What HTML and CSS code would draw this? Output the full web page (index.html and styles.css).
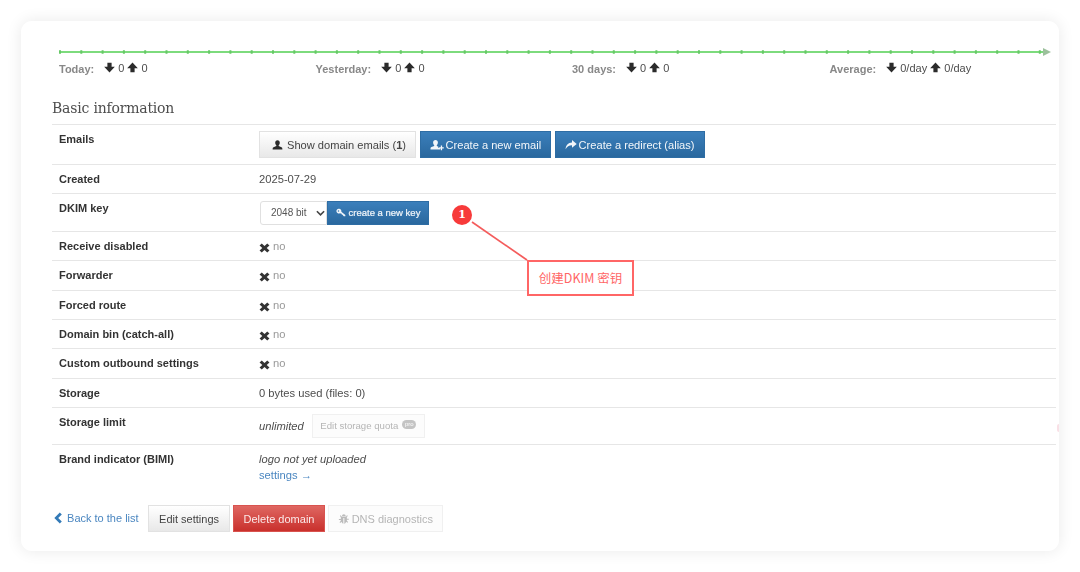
FILE: index.html
```html
<!DOCTYPE html>
<html lang="en">
<head>
<meta charset="utf-8">
<title>Domain</title>
<link rel="stylesheet" href="styles.css">
</head>
<body>
<svg class="sprites" aria-hidden="true">
  <symbol id="i-down" viewBox="0 0 12 12"><path d="M3.700 0.800h4.600v4.400h3.500L6 11.400 0.200 5.200h3.500z"/></symbol>
  <symbol id="i-up" viewBox="0 0 12 12"><path d="M3.700 11.200h4.600V6.800h3.500L6 0.600 0.200 6.800h3.500z"/></symbol>
  <symbol id="i-user" viewBox="0 0 12 12"><path d="M6 0.800c1.600 0 2.500 1.200 2.500 2.800 0 1.200-.5 2.200-1.200 2.800v.8l3 1.200c.7.3 1 .9 1 1.600v1H.7v-1c0-.7.3-1.300 1-1.600l3-1.200v-.8C4 5.800 3.500 4.800 3.500 3.600 3.500 2 4.400.8 6 .8z"/></symbol>
  <symbol id="i-useradd" viewBox="0 0 14 12"><path d="M5.500 1c1.500 0 2.400 1.100 2.400 2.600 0 1.100-.5 2.100-1.100 2.700v.8l1.600.6v1.300h1.800v1.500H.5V9.600c0-.7.3-1.200 1-1.500l2.700-1v-.8C3.600 5.700 3.100 4.700 3.100 3.600 3.100 2.100 4 1 5.500 1z"/><path d="M10.800 6.500h1.300v1.700h1.700v1.300h-1.700v1.700h-1.300V9.500H9.100V8.200h1.700z"/></symbol>
  <symbol id="i-share" viewBox="0 0 12 12"><path d="M7 1l4.700 3.900L7 8.800V6.300C4 6.300 2 7.500.6 10.200.8 6.300 3 3.700 7 3.500z"/></symbol>
  <symbol id="i-key" viewBox="0 0 12 12"><path fill-rule="evenodd" d="M3.700 1a2.800 2.800 0 0 1 2.700 3.500l4.800 3.800v1.500H9.300L8.500 9 8 8.200 7 8 6.800 7 4.700 6.200A2.800 2.800 0 1 1 3.700 1zM3 2.700a.9.9 0 1 0 0 1.800.9.9 0 0 0 0-1.800z"/></symbol>
  <symbol id="i-x" viewBox="0 0 12 12"><path d="M3 1.500L6 4.300l3-2.800 2.400 2.300L8.400 6.500l3 2.800L9 11.500 6 8.700l-3 2.800L.6 9.300l3-2.800-3-2.700z"/></symbol>
  <symbol id="i-back" viewBox="0 0 12 12"><path d="M7.800.6l2 2L6.200 6l3.600 3.400-2 2L2.300 6z"/></symbol>
  <symbol id="i-bug" viewBox="0 0 12 12"><path d="M6 1a2 2 0 0 1 2 1.800H4A2 2 0 0 1 6 1zM3.600 3.500h4.800l.8-1.300.9.500-1 1.500v1.600h2v1h-2v.9l1.300 1.500-.8.700-1.100-1.200C7.900 9.900 7 10.800 6.500 11V5h-1v6c-.5-.2-1.400-1.100-2-2.200L2.400 10l-.8-.7 1.300-1.500V6.900h-2v-1h2V4.300l-1-1.600.9-.5z"/></symbol>
</svg>

<main class="card">
  <div class="chart">
    <svg class="axis" viewBox="0 0 1000 12" width="1000" height="12" aria-hidden="true">
      <line x1="0" y1="6" x2="986" y2="6" class="axis-line"/>
      <line x1="0" y1="6" x2="986" y2="6" class="axis-ticks"/>
      <path class="axis-head" d="M984 2l8 4-8 4z"/>
    </svg>
    <div class="stats">
      <div class="stat"><span class="stat-label">Today:</span><span class="stat-val"><svg class="ic"><use href="#i-down"/></svg> 0 <svg class="ic"><use href="#i-up"/></svg> 0</span></div>
      <div class="stat"><span class="stat-label">Yesterday:</span><span class="stat-val"><svg class="ic"><use href="#i-down"/></svg> 0 <svg class="ic"><use href="#i-up"/></svg> 0</span></div>
      <div class="stat"><span class="stat-label">30 days:</span><span class="stat-val"><svg class="ic"><use href="#i-down"/></svg> 0 <svg class="ic"><use href="#i-up"/></svg> 0</span></div>
      <div class="stat"><span class="stat-label">Average:</span><span class="stat-val"><svg class="ic"><use href="#i-down"/></svg> 0/day <svg class="ic"><use href="#i-up"/></svg> 0/day</span></div>
    </div>
  </div>

  <h2 class="title">Basic information</h2>

  <div class="info">
    <div class="row row-emails">
      <div class="key">Emails</div>
      <div class="val btns">
        <a class="btn btn-light btn-big btn-show"><svg class="ic ic-user"><use href="#i-user"/></svg>Show domain emails (<b>1</b>)</a>
        <a class="btn btn-blue btn-big btn-new"><svg class="ic ic-wide"><use href="#i-useradd"/></svg>Create a new email</a>
        <a class="btn btn-blue btn-big"><svg class="ic"><use href="#i-share"/></svg>Create a redirect (alias)</a>
      </div>
    </div>
    <div class="row row-text"><div class="key">Created</div><div class="val">2025-07-29</div></div>
    <div class="row row-dkim">
      <div class="key">DKIM key</div>
      <div class="val joined">
        <span class="select">2048 bit<svg class="caret" viewBox="0 0 10 6"><path d="M1 1l4 4 4-4"/></svg></span>
        <a class="btn btn-blue btn-key"><svg class="ic ic-sm"><use href="#i-key"/></svg>create a new key</a>
      </div>
    </div>
    <div class="row row-text"><div class="key">Receive disabled</div><div class="val no"><svg class="ic ic-x"><use href="#i-x"/></svg> no</div></div>
    <div class="row row-text"><div class="key">Forwarder</div><div class="val no"><svg class="ic ic-x"><use href="#i-x"/></svg> no</div></div>
    <div class="row row-text"><div class="key">Forced route</div><div class="val no"><svg class="ic ic-x"><use href="#i-x"/></svg> no</div></div>
    <div class="row row-text"><div class="key">Domain bin (catch-all)</div><div class="val no"><svg class="ic ic-x"><use href="#i-x"/></svg> no</div></div>
    <div class="row row-text"><div class="key">Custom outbound settings</div><div class="val no"><svg class="ic ic-x"><use href="#i-x"/></svg> no</div></div>
    <div class="row row-text"><div class="key">Storage</div><div class="val">0 bytes used (files: 0)</div></div>
    <div class="row row-limit">
      <div class="key">Storage limit</div>
      <div class="val limit"><i>unlimited</i><a class="btn btn-off btn-quota">Edit storage quota <span class="pro">pro</span></a></div>
    </div>
    <div class="row row-bimi">
      <div class="key">Brand indicator (BIMI)</div>
      <div class="val val-bimi"><i>logo not yet uploaded</i><br><a class="link">settings →</a></div>
    </div>
  </div>

  <div class="actions">
    <a class="link back"><svg class="ic"><use href="#i-back"/></svg> Back to the list</a>
    <a class="btn btn-light btn-act">Edit settings</a>
    <a class="btn btn-red btn-act">Delete domain</a>
    <a class="btn btn-off btn-act btn-dns"><svg class="ic"><use href="#i-bug"/></svg> DNS diagnostics</a>
  </div>

  <svg class="leader" width="60" height="46" aria-hidden="true"><line x1="2" y1="2" x2="57" y2="40"/></svg>
  <span class="marker">1</span>
  <div class="callout">创建DKIM 密钥</div>
  <span class="edge-dot"></span>
</main>
</body>
</html>
```
FILE: styles.css
```css
* { box-sizing: border-box; }
html, body { margin: 0; height: 572px; overflow: hidden; background: #fff; }
body {
  padding: 21px;
  font-family: "Liberation Sans", Arial, sans-serif;
  font-size: 12px;
  color: #333;
}
.sprites { display: none; }
.card {
  position: relative;
  height: 530px;
  padding: 25px 3px 0 31px;
  background: #fff;
  border-radius: 11px;
  box-shadow: 0 0 16px rgba(0, 0, 0, .09);
  filter: blur(.3px);
}
.chart { padding-left: 7px; }
.axis { display: block; overflow: visible; }
.axis-line { stroke: #7ddb7d; stroke-width: 2; }
.axis-ticks { stroke: #66c866; stroke-width: 3.500; stroke-dasharray: 2 19.300; }
.axis-head { fill: #9cc09c; }
.stats {
  display: grid;
  grid-template-columns: repeat(4, 256.500px);
  margin-top: 1px;
  height: 17px;
  align-items: center;
}
.stat { display: flex; align-items: center; }
.stat-label { font-weight: bold; color: #888; font-size: 11px; padding-top: 2px; }
.stat-val { margin-left: 10px; font-size: 11px; color: #4d4d4d; white-space: nowrap; }
.stat:last-child .stat-label { margin-left: 1px; }
.ic { width: 12px; height: 12px; fill: #2b2b2b; vertical-align: -2px; }
.stat-val .ic { width: 11px; height: 11px; vertical-align: -1px; }
.ic-user { width: 11px; }
.ic-wide { width: 14px; }
.ic-sm { width: 10px; height: 10px; vertical-align: -1px; }
.ic-x { fill: #333; vertical-align: -3px; width: 11px; height: 11px; }
.title {
  margin: 22px 0 0;
  height: 26px;
  font-family: "DejaVu Serif", "Liberation Serif", serif;
  font-size: 14px;
  font-weight: normal;
  letter-spacing: -.2px;
  line-height: 20px;
  color: #4d4d4d;
}
.info { border-top: 1px solid #e6e6e6; }
.row {
  display: flex;
  align-items: flex-start;
  border-bottom: 1px solid #e6e6e6;
}
.key {
  flex: 0 0 207px;
  padding: 7px 0 0 7px;
  font-size: 11px;
  font-weight: bold;
  line-height: 14px;
  color: #333;
}
.val { padding-top: 7px; font-size: 11.200px; line-height: 14px; color: #4d4d4d; }
.no { color: #999; }
.row-text { height: 29.400px; }
.row-emails { height: 40px; }
.row-emails .val { padding-top: 6px; }
.row-dkim { height: 37.400px; }
.row-dkim .val { padding-top: 7px; }
.row-limit { height: 37px; }
.row-limit .val { padding-top: 6px; }
.row-bimi { border-bottom: 0; height: 52px; }
.val-bimi { padding-top: 6px; line-height: 16px; }
.btns { display: flex; gap: 4px; }
.btn {
  display: inline-flex;
  align-items: center;
  justify-content: center;
  white-space: nowrap;
  border: 1px solid transparent;
}
.btn .ic { margin-right: 2px; }
.btn-big { height: 27px; padding: 0 9px; font-size: 11.100px; }
.btn-show { padding: 0 9px 0 12px; }
.btn-show .ic { margin-right: 4px; }
.btn-new { padding: 0 8.500px; }
.btn-light {
  color: #444;
  background: linear-gradient(#fff, #e8e8e8);
  border-color: #e2e2e2;
}
.btn-blue {
  color: #f2f6fa;
  background: linear-gradient(#3b7fbb, #2a689e);
  border-color: #2e6da4;
}
.btn-blue .ic { fill: #f2f6fa; }
.btn-red {
  color: #fbeaea;
  background: linear-gradient(#df6762, #c9302c);
  border-color: #d9534f;
}
.btn-off {
  color: #b5b5b5;
  background: #fcfcfc;
  border-color: #f0f0f0;
}
.btn-off .ic { fill: #bbb; }
.joined { display: flex; padding-left: 1px; }
.select {
  display: flex;
  align-items: center;
  width: 67px;
  height: 24px;
  padding-left: 10px;
  font-size: 10px;
  color: #555;
  border: 1px solid #e0e0e0;
  border-radius: 3px 0 0 3px;
}
.caret { width: 9px; height: 6px; margin-left: 9px; fill: none; stroke: #444; stroke-width: 1.800; }
.btn-key { width: 102px; height: 24px; font-size: 9.500px; -webkit-text-stroke: .2px #f2f6fa; }
.btn-key .ic { margin-right: 3px; }
.limit { display: flex; align-items: center; gap: 8px; }
.btn-quota { height: 24px; width: 113px; font-size: 9.600px; }
.pro {
  display: inline-block;
  margin: 0 0 4px 4px;
  width: 14px;
  height: 9px;
  border-radius: 5px;
  background: #c4c4c4;
  color: #fff;
  font-size: 6px;
  line-height: 9px;
  text-align: center;
}
.link { color: #4a86c0; }
.actions { display: flex; align-items: center; gap: 2.500px; padding: 8px 0 0; }
.back { margin-right: 7px; padding-bottom: 2px; font-size: 11px; }
.back .ic { fill: #337ab7; }
.btn-act { height: 27px; font-size: 11px; padding: 0 10px; }
.btn-dns { padding: 0 9px; width: 115px; }
.leader { position: absolute; left: 449px; top: 199px; overflow: visible; }
.leader line { stroke: #f45c5c; stroke-width: 1.700; }
.marker {
  position: absolute;
  left: 431px;
  top: 184px;
  width: 20px;
  height: 20px;
  border-radius: 50%;
  background: #f73a3a;
  color: #fff;
  font-family: "DejaVu Serif", serif;
  font-size: 11px;
  font-weight: bold;
  line-height: 20px;
  text-align: center;
}
.callout {
  position: absolute;
  left: 506px;
  top: 239px;
  width: 107px;
  height: 36px;
  border: 2px solid #f66;
  background: #fff;
  color: #f66;
  font-family: "Noto Sans CJK SC", sans-serif;
  font-size: 12.500px;
  line-height: 32px;
  text-align: center;
}
.edge-dot {
  position: absolute;
  right: 0;
  top: 403px;
  width: 2px;
  height: 8px;
  border-radius: 2px 0 0 2px;
  background: #f9e0e6;
}
```
